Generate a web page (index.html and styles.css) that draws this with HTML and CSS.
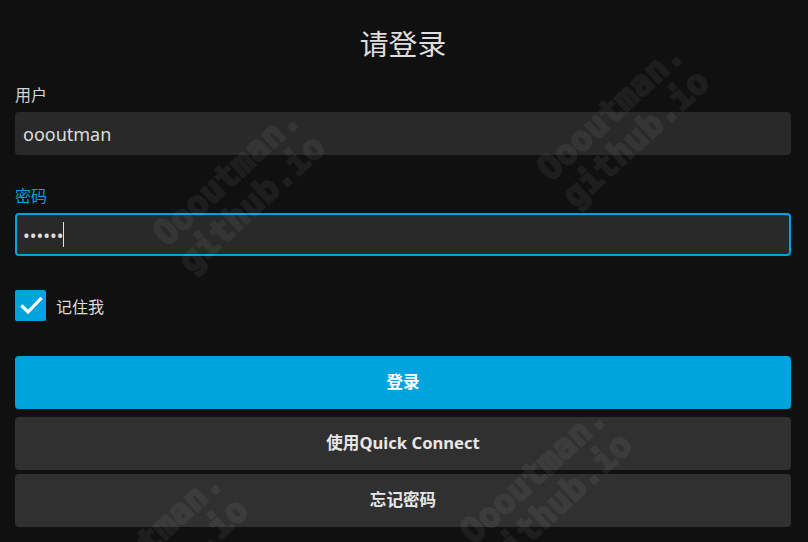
FILE: index.html
```html
<!DOCTYPE html>
<html lang="zh-CN">
<head>
  <meta charset="UTF-8">
  <meta name="viewport" content="width=device-width, initial-scale=1.0">
  <title>请登录</title>
  <link rel="stylesheet" href="styles.css">
</head>
<body>
<div class="page">
  <h1 class="title">请登录</h1>
  <form class="login-form">
    <div class="field">
      <label class="field-label" for="username">用户</label>
      <input class="field-input" id="username" type="text" value="oooutman">
    </div>
    <div class="field">
      <label class="field-label field-label-focused" for="password">密码</label>
      <div class="input-wrap">
        <input class="field-input field-input-focused" id="password" type="password" value="123456">
        <span class="caret"></span>
      </div>
    </div>
    <label class="remember">
      <span class="checkbox">
        <svg viewBox="0 0 30 30" width="30" height="30"><path d="M6.5 15.5 L12 21 L24.5 8" fill="none" stroke="#fff" stroke-width="3.2" stroke-linecap="square"/></svg>
      </span>
      <span>记住我</span>
    </label>
    <div class="buttons">
      <button class="btn btn-primary" type="button">登录</button>
      <button class="btn" type="button">使用Quick Connect</button>
      <button class="btn" type="button">忘记密码</button>
    </div>
  </form>

  <div class="watermark" style="left: 239px; top: 190px;">Oooutman.<br>github.io</div>
  <div class="watermark" style="left: 623px; top: 125px;">Oooutman.<br>github.io</div>
  <div class="watermark" style="left: 546px; top: 488px;">Oooutman.<br>github.io</div>
  <div class="watermark" style="left: 162px; top: 553px;">Oooutman.<br>github.io</div>
</div>
</body>
</html>
```

FILE: styles.css
```css
html, body{
  margin: 0;
  height: 100%;
  background: #101010;
  overflow: hidden;
}
body{
  font-family: "Noto Sans", "Noto Sans CJK SC", sans-serif;
  color: #dddddd;
}
.page{
  position: relative;
  height: 100%;
  padding: 26px 17px 0 15px;
  box-sizing: border-box;
  overflow: hidden;
}
.title{
  margin: 0;
  font-size: 28.8px;
  font-weight: 400;
  line-height: 36px;
  text-align: center;
  color: #dedede;
}
.login-form{
  margin-top: 23px;
}
.field{
  margin-bottom: 31px;
}
.field-label{
  display: block;
  font-size: 16px;
  line-height: 20px;
  margin-bottom: 7px;
  color: #d4d4d4;
}
.field-label-focused{
  color: #00a4dc;
}
.input-wrap{
  position: relative;
}
.field-input{
  display: block;
  width: 100%;
  height: 43px;
  box-sizing: border-box;
  margin: 0;
  padding: 0 6px;
  border: 2px solid #292929;
  border-radius: 4px;
  background: #292929;
  color: #dddddd;
  font-family: inherit;
  font-size: 18px;
  outline: none;
}
.field-input-focused{
  border-color: #00a4dc;
}
.caret{
  position: absolute;
  left: 48px;
  top: 9px;
  width: 1px;
  height: 25px;
  background: #e0e0e0;
}
.remember{
  display: flex;
  align-items: center;
  gap: 10px;
  margin-top: 34px;
  font-size: 16px;
  color: #dddddd;
}
.checkbox{
  display: flex;
  align-items: center;
  justify-content: center;
  width: 31px;
  height: 31px;
  border-radius: 2px;
  background: #00a4dc;
}
.buttons{
  display: flex;
  flex-direction: column;
  gap: 4px;
  margin-top: 35px;
}
.btn{
  height: 53px;
  margin: 0;
  padding: 0 0 4px;
  border: 0;
  border-radius: 4px;
  background: #303030;
  color: #e6e6e6;
  font-family: inherit;
  font-size: 16.6px;
  font-weight: 700;
}
.btn-primary{
  background: #00a4dc;
  color: #ffffff;
  margin-bottom: 4px;
}
.watermark{
  position: absolute;
  transform: translate(-50%, -50%) rotate(-42.6deg);
  font-family: "DejaVu Sans Mono", monospace;
  font-size: 34px;
  font-weight: 700;
  line-height: 37px;
  text-align: center;
  white-space: nowrap;
  color: #ffffff;
  -webkit-text-stroke: 2px #ffffff;
  opacity: 0.055;
  pointer-events: none;
}
```
